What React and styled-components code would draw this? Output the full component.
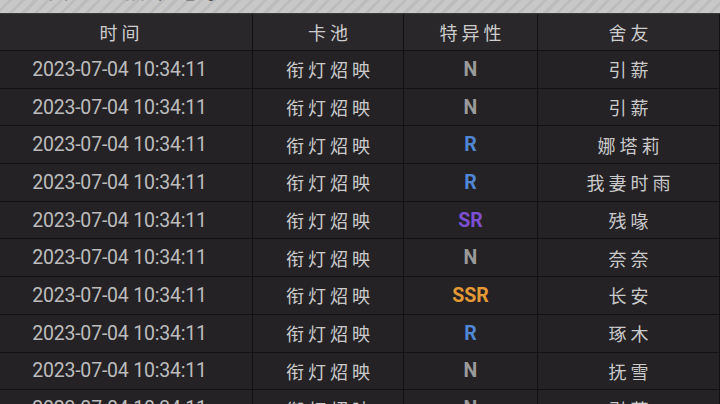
import React from "react";
import styled, { createGlobalStyle } from "styled-components";

const Global = createGlobalStyle`
  html, body { margin: 0; padding: 0; background: #232124; }
  body { width: 720px; height: 404px; overflow: hidden; }
`;

const Page = styled.div`
  width: 720px;
  height: 404px;
  overflow: hidden;
  display: flex;
  flex-direction: column;
  background: #232124;
`;

const TopBar = styled.div`
  height: 14px;
  flex: none;
  overflow: hidden;
  display: flex;
  align-items: flex-end;
  gap: 50px;
  background: repeating-linear-gradient(
    135deg,
    #c8c8c8 0px,
    #c8c8c8 6px,
    #bcbcbc 6px,
    #bcbcbc 9px
  );
  border-bottom: 1px solid #3a393b;
  box-sizing: border-box;
`;

const TopText = styled.span`
  font-family: "Noto Sans CJK SC", sans-serif;
  font-size: 20px;
  line-height: 20px;
  margin-bottom: 12px;
  color: #555;
  letter-spacing: 6px;
  white-space: nowrap;
`;

const Grid = styled.div`
  display: grid;
  grid-template-columns: 253px 151px 134px 182px;
`;

const HeadCell = styled.div`
  height: 37px;
  display: flex;
  align-items: center;
  justify-content: center;
  box-sizing: border-box;
  background: #29272a;
  border-right: 1px solid #111012;
  border-bottom: 1px solid #111012;
  padding-right: ${(p) => p.$pr || 0}px;
  font-family: "Noto Sans CJK SC", sans-serif;
  font-size: 18px;
  letter-spacing: 4px;
  text-indent: 4px;
  color: #cdcdcd;
  &:last-child { border-right: none; }
`;

const Cell = styled.div`
  height: 37.7px;
  display: flex;
  align-items: center;
  justify-content: center;
  box-sizing: border-box;
  background: #242225;
  border-right: 1px solid #111012;
  border-bottom: 1px solid #111012;
  padding-right: ${(p) => p.$pr || 0}px;
  color: #c9c9c9;
  white-space: nowrap;
`;

const Time = styled.span`
  font-family: Roboto, "Liberation Sans", sans-serif;
  font-size: 19.5px;
  letter-spacing: -0.2px;
  color: #bcbcbc;
`;

const Cjk = styled.span`
  font-family: "Noto Sans CJK SC", sans-serif;
  font-size: 18px;
  letter-spacing: 4px;
  text-indent: 4px;
  color: #cacaca;
`;

const rarityColor = {
  N: "#9a9a9a",
  R: "#4f86d6",
  SR: "#7c4fd2",
  SSR: "#e39a35",
};

const Rarity = styled.span`
  font-family: Roboto, "Open Sans", sans-serif;
  font-weight: 700;
  font-size: 19.5px;
  color: ${(p) => rarityColor[p.$r]};
`;

const rows = [
  ["N", "引薪"],
  ["N", "引薪"],
  ["R", "娜塔莉"],
  ["R", "我妻时雨"],
  ["SR", "残喙"],
  ["N", "奈奈"],
  ["SSR", "长安"],
  ["R", "琢木"],
  ["N", "抚雪"],
  ["N", "引薪"],
];

export default function App() {
  return (
    <Page>
      <Global />
      <TopBar>
        <TopText>‹ 返回</TopText>
        <TopText>抽卡记录</TopText>
      </TopBar>
      <Grid>
        <HeadCell $pr={13}>时间</HeadCell>
        <HeadCell>卡池</HeadCell>
        <HeadCell>特异性</HeadCell>
        <HeadCell>舍友</HeadCell>
        {rows.map(([r, name], i) => (
          <React.Fragment key={i}>
            <Cell $pr={13}>
              <Time>2023-07-04 10:34:11</Time>
            </Cell>
            <Cell>
              <Cjk>衔灯炤映</Cjk>
            </Cell>
            <Cell>
              <Rarity $r={r}>{r}</Rarity>
            </Cell>
            <Cell>
              <Cjk>{name}</Cjk>
            </Cell>
          </React.Fragment>
        ))}
      </Grid>
    </Page>
  );
}
